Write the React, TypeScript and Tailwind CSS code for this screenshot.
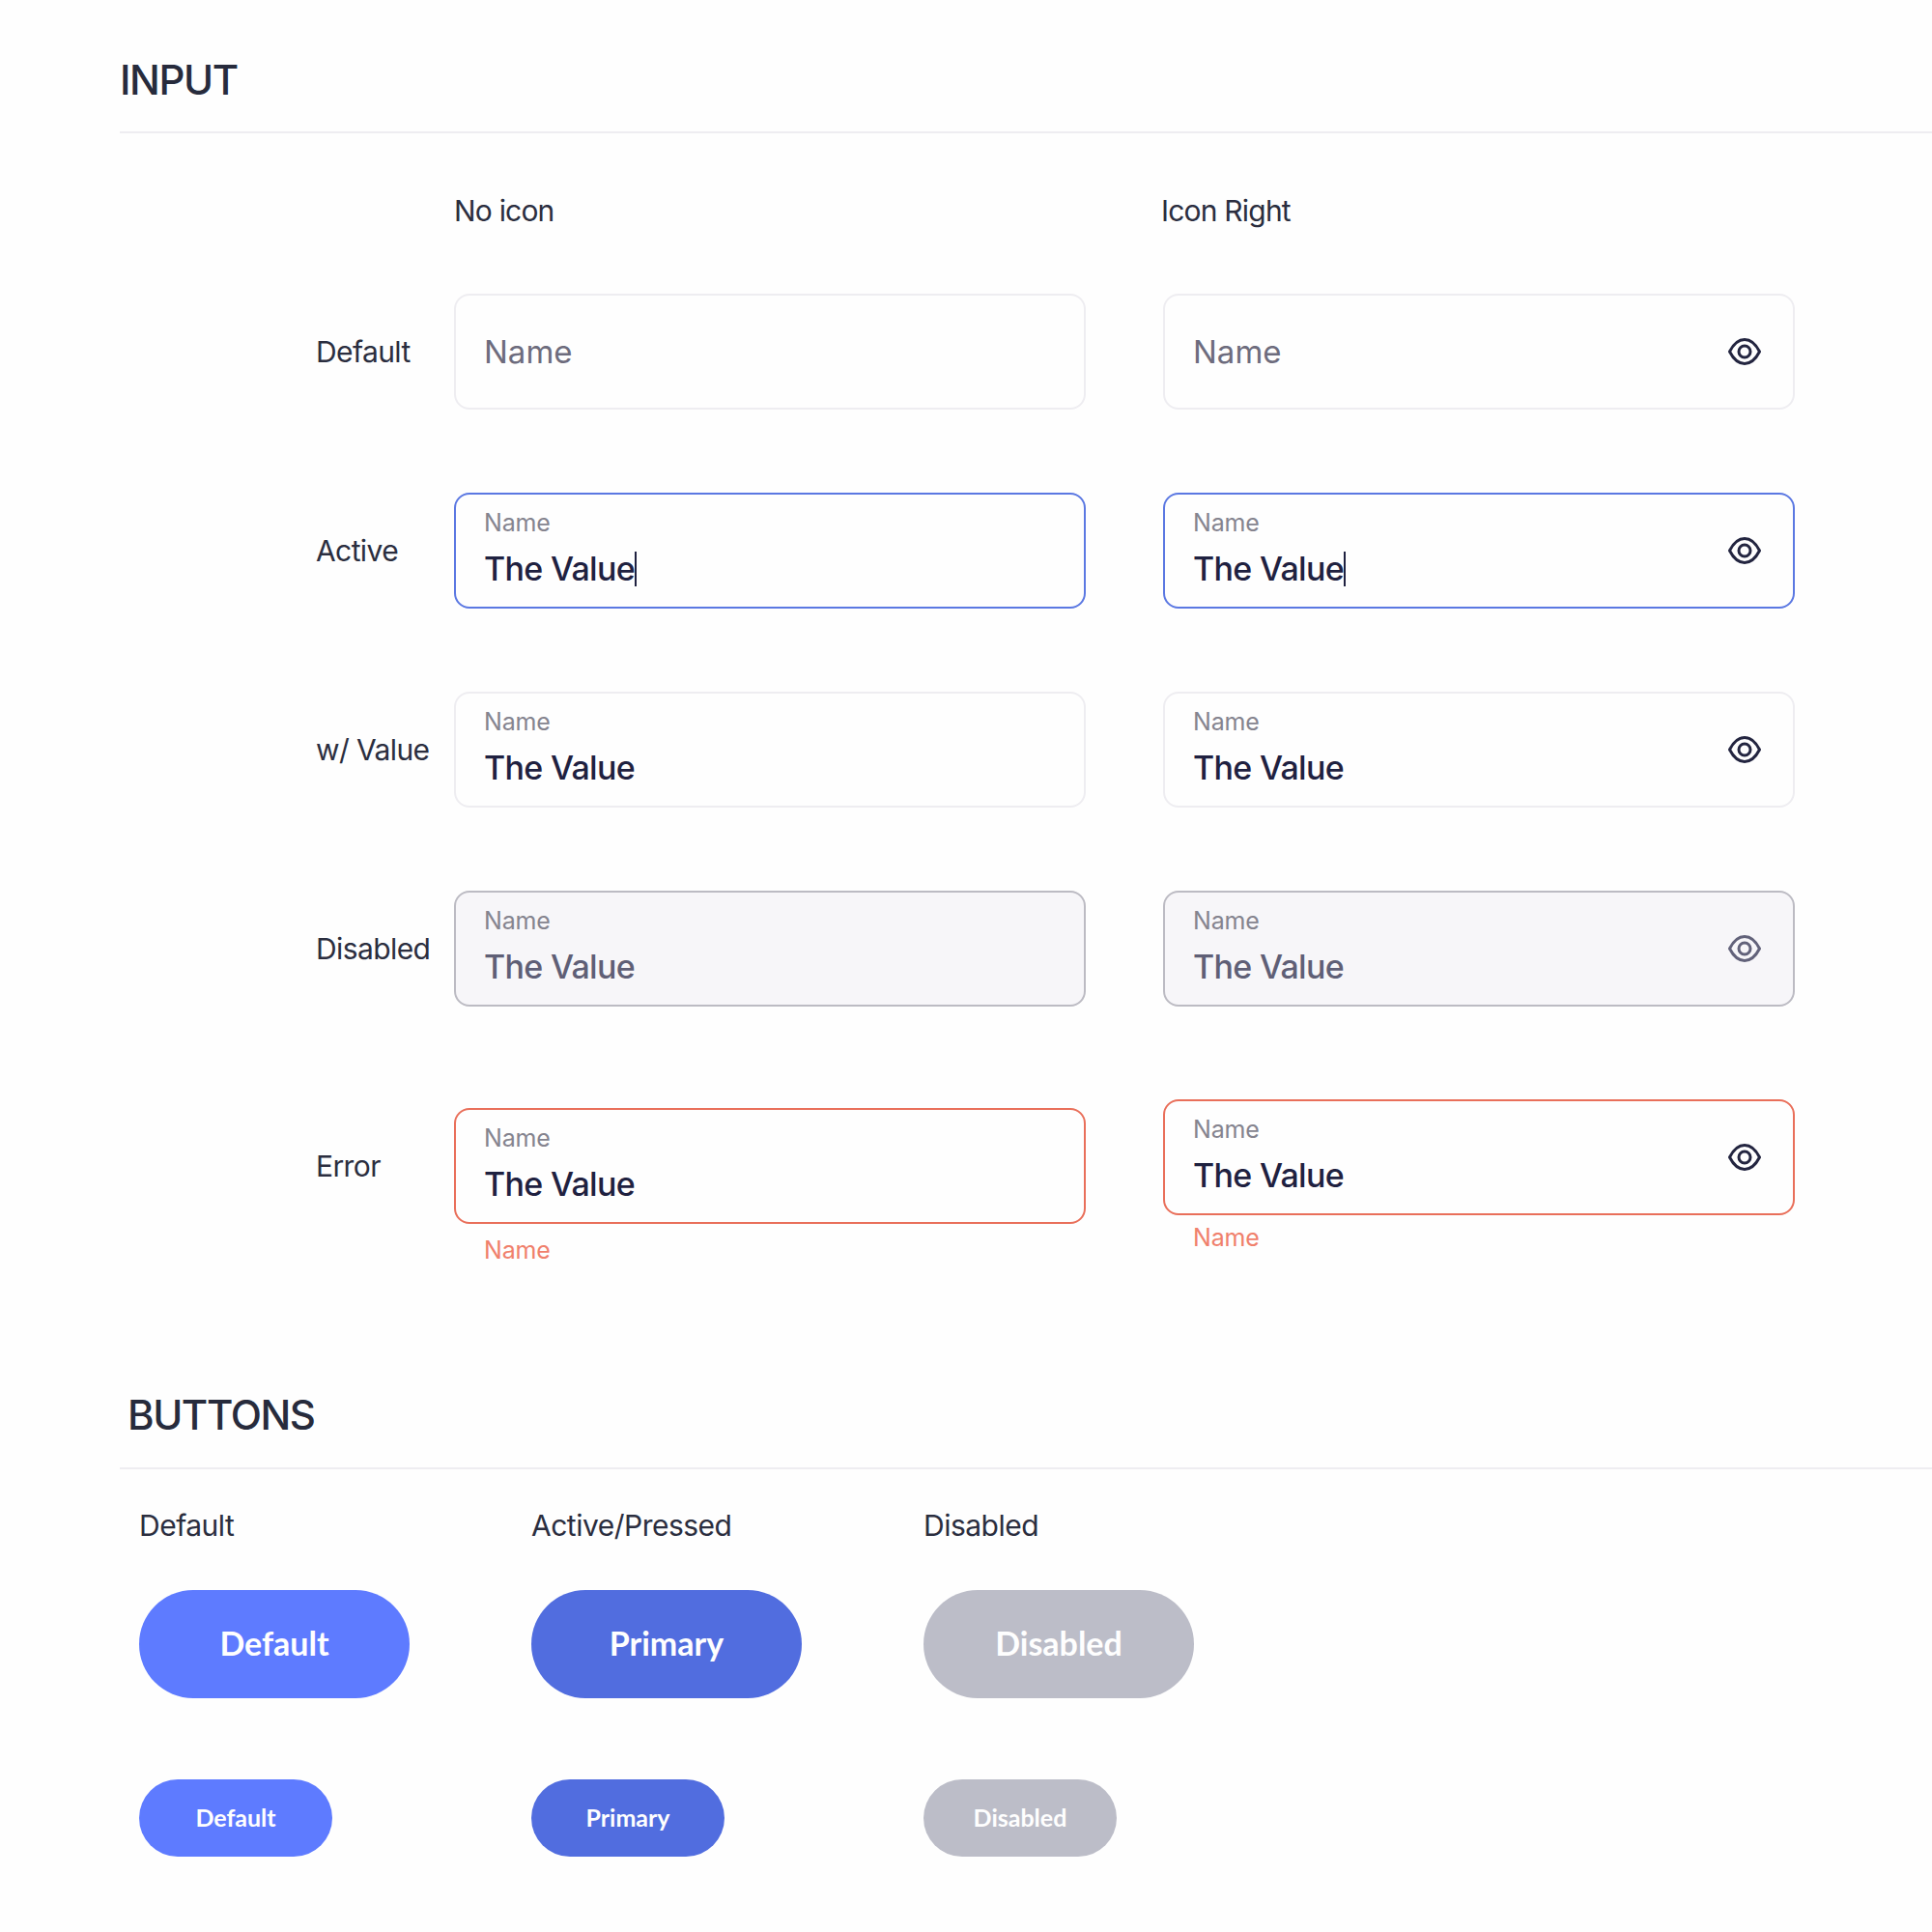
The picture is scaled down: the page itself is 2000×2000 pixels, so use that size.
const font = "font-['Inter','Liberation_Sans',sans-serif]";

function EyeIcon({ muted }: { muted?: boolean }) {
  return (
    <svg width="40" height="40" viewBox="0 0 40 40" fill="none" className={muted ? 'text-[#62627a]' : 'text-[#232540]'} stroke="currentColor" strokeWidth="3">
      <path d="M4.500 20c3.400-6.600 9-12.400 15.500-12.400S32.100 13.400 35.500 20c-3.400 6.600-9 12.400-15.500 12.400S7.900 26.600 4.500 20z" strokeLinejoin="round" />
      <circle cx="20" cy="20" r="6" />
    </svg>
  );
}

type FieldProps = {
  state: 'default' | 'active' | 'value' | 'disabled' | 'error';
  icon?: boolean;
};

const borders = {
  default: 'border-[#eeedf1] bg-[#fefefe]',
  active: 'border-[#5b78e2] bg-[#fefefe]',
  value: 'border-[#eeedf1] bg-[#fefefe]',
  disabled: 'border-[#bcbbc3] bg-[#f7f6f9]',
  error: 'border-[#e96f5a] bg-[#fefefe]',
};

function Field({ state, icon }: FieldProps) {
  return (
    <div className={`flex h-[120px] w-[654px] items-center justify-between rounded-2xl border-2 pl-[29px] pr-[30px] ${borders[state]}`}>
      {state === 'default' ? (
        <span className="text-[33px] leading-[42px] text-[#6d6c7d]">Name</span>
      ) : (
        <div className="-mt-[5px] flex flex-col">
          <span className="text-[25px] leading-[32px] tracking-[-0.2px] text-[#85848f]">Name</span>
          <span className={`mt-[10px] flex h-[44px] items-center text-[34px] font-medium leading-[44px] tracking-[-0.7px] ${state === 'disabled' ? 'text-[#5f5f76]' : 'text-[#1f2140]'}`}>
            The Value
            {state === 'active' && <span className="h-[36px] w-[2px] bg-[#1f2140]" />}
          </span>
        </div>
      )}
      {icon && <EyeIcon muted={state === 'disabled'} />}
    </div>
  );
}

function Row({ label, state }: { label: string; state: FieldProps['state'] }) {
  return (
    <div className="flex items-center">
      <div className="w-[143px] text-[30px] leading-[40px] tracking-[-0.6px] text-[#2b2e3f]">{label}</div>
      <Field state={state} />
      <div className="ml-[80px]">
        <Field state={state} icon />
      </div>
    </div>
  );
}

function Btn({ text, tone, small }: { text: string; tone: string; small?: boolean }) {
  return (
    <div
      className={`flex items-center justify-center rounded-full pb-[2px] font-['Lato',sans-serif] font-bold tracking-normal text-[#fefefe] ${tone} ${
        small ? 'h-[80px] w-[200px] text-[25px]' : 'h-[112px] w-[280px] text-[34px]'
      }`}
    >
      {text}
    </div>
  );
}

export default function App() {
  return (
    <div className={`h-[2000px] w-[2000px] overflow-hidden bg-[#fefefe] pl-[124px] text-[#2b2e3f] ${font}`}>
      {/* Input section */}
      <h1 className="h-[138px] border-b-2 border-[#eeedf1] pt-[54px] text-[42px] font-medium leading-[58px] tracking-[-1.4px] text-[#272b3c]">INPUT</h1>
      <div className="flex pl-[346px] pt-[60px] text-[30px] leading-[40px] tracking-[-0.8px]">
        <div className="w-[732px]">No icon</div>
        <div>Icon Right</div>
      </div>
      <div className="ml-[203px] mt-[66px] flex flex-col gap-[86px]">
        <Row label="Default" state="default" />
        <Row label="Active" state="active" />
        <Row label="w/ Value" state="value" />
        <Row label="Disabled" state="disabled" />
      </div>

      <div className="ml-[203px] mt-[105px] flex h-[196px] items-start">
        <div className="flex h-[120px] w-[143px] items-center text-[30px] leading-[40px] tracking-[-0.6px]">Error</div>
        <div>
          <Field state="error" />
          <div className="mt-[11px] pl-[31px] text-[25px] leading-[32px] tracking-[-0.2px] text-[#f0806c]">Name</div>
        </div>
        <div className="ml-[80px] -mt-[9px]">
          <Field state="error" icon />
          <div className="mt-[7px] pl-[31px] text-[25px] leading-[32px] tracking-[-0.2px] text-[#f0806c]">Name</div>
        </div>
      </div>

      {/* Buttons section */}
      <h1 className="mt-[61px] h-[117px] border-b-2 border-[#eeedf1] pl-[8px] pt-[32px] text-[42px] font-medium leading-[58px] tracking-[-1.4px] text-[#272b3c]">BUTTONS</h1>
      <div className="grid grid-cols-[406px_406px_406px] pl-[20px] pt-[38px] text-[30px] leading-[40px] tracking-[-0.5px]">
        <div>Default</div>
        <div>Active/Pressed</div>
        <div>Disabled</div>
        <div className="mt-[47px]"><Btn text="Default" tone="bg-[#5e7bff]" /></div>
        <div className="mt-[47px]"><Btn text="Primary" tone="bg-[#516ddf]" /></div>
        <div className="mt-[47px]"><Btn text="Disabled" tone="bg-[#bcbdc8]" /></div>
        <div className="mt-[84px]"><Btn small text="Default" tone="bg-[#5e7bff]" /></div>
        <div className="mt-[84px]"><Btn small text="Primary" tone="bg-[#516ddf]" /></div>
        <div className="mt-[84px]"><Btn small text="Disabled" tone="bg-[#bcbdc8]" /></div>
      </div>
    </div>
  );
}
